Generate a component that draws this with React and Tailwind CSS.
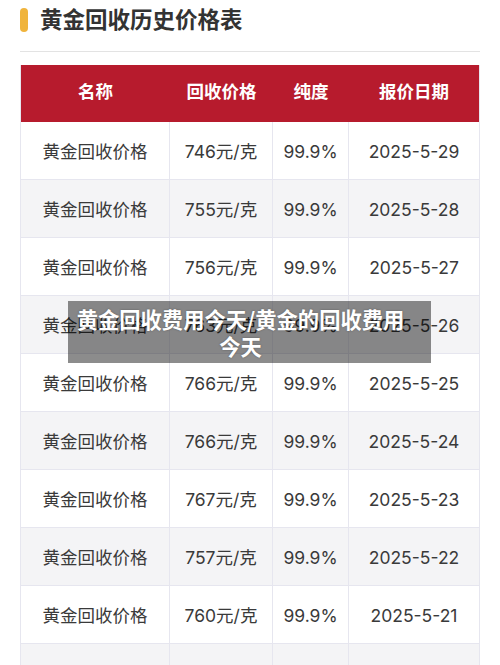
const rows = [
  ['746元/克', '2025-5-29'],
  ['755元/克', '2025-5-28'],
  ['756元/克', '2025-5-27'],
  ['763元/克', '2025-5-26'],
  ['766元/克', '2025-5-25'],
  ['766元/克', '2025-5-24'],
  ['767元/克', '2025-5-23'],
  ['757元/克', '2025-5-22'],
  ['760元/克', '2025-5-21'],
  ['758元/克', '2025-5-20'],
];

const font = { fontFamily: 'Inter, "Noto Sans CJK SC", "Noto Sans", sans-serif' };

export default function App() {
  return (
    <div className="relative w-[500px] h-[665px] overflow-hidden bg-white" style={font}>
      {/* title */}
      <div className="flex items-center gap-3 px-5 pt-2">
        <div className="w-2 h-6 rounded-full bg-[#f0b43c]" />
        <h1 className="text-[22.5px] leading-6 font-bold text-[#333]">黄金回收历史价格表</h1>
      </div>
      <div className="mx-5 mt-[19px] border-t border-[#e3e3e3]" />

      {/* table */}
      <div className="mx-5 mt-[13px] border-x border-[#e6e6ef]">
        <div className="grid grid-cols-[149px_103px_76px_1fr] h-[57px] items-center bg-[#b71b2d] text-white text-[17.5px] font-bold text-center pb-[3px]">
          <div>名称</div>
          <div>回收价格</div>
          <div>纯度</div>
          <div>报价日期</div>
        </div>
        {rows.map((r, i) => (
          <div
            key={i}
            className={`grid grid-cols-[149px_103px_76px_1fr] h-[58px] items-stretch text-center text-[17.5px] text-[#3a3a3a] border-b border-[#e6e6ef] ${i % 2 === 1 ? 'bg-[#f4f4f6]' : 'bg-white'}`}
          >
            <div className="flex items-center justify-center pt-[3px] border-r border-[#e6e6ef]">黄金回收价格</div>
            <div className="flex items-center justify-center pt-[3px] border-r border-[#e6e6ef]">{r[0]}</div>
            <div className="flex items-center justify-center pt-[3px] border-r border-[#e6e6ef]">99.9%</div>
            <div className="flex items-center justify-center pt-[3px]">{r[1]}</div>
          </div>
        ))}
      </div>

      {/* caption overlay */}
      <div className="absolute left-[68px] top-[301px] w-[363px] h-[62px] bg-black/45 flex items-center justify-center pr-[18px]">
        <p className="text-white text-[21.3px] leading-[27px] font-bold text-center [text-shadow:0_0_2px_rgba(0,0,0,0.35)]" style={{ fontFamily: '"Noto Sans CJK SC", sans-serif' }}>
          黄金回收费用今天/黄金的回收费用
          <br />
          今天
        </p>
      </div>
    </div>
  );
}
